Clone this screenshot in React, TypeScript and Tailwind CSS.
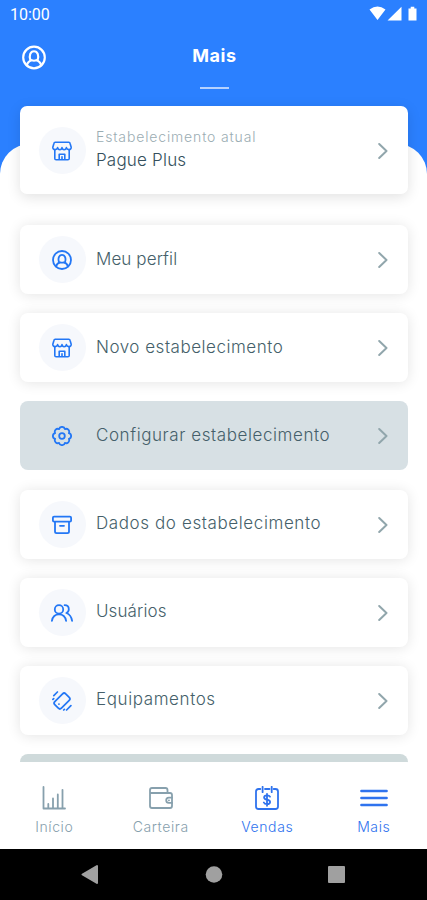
import React from 'react';
import clsx from 'clsx';

type IconProps = { className?: string };

const stroke = {
  fill: 'none',
  stroke: 'currentColor',
  strokeWidth: 1.8,
  strokeLinecap: 'round' as const,
  strokeLinejoin: 'round' as const,
};

const UserIcon = ({ className }: IconProps) => (
  <svg viewBox="0 0 20 20" className={className} {...stroke}>
    <circle cx="10" cy="10" r="9" />
    <path d="M7 12.3c-1.3-4 0-7.500 3-7.500s4.300 3.500 3 7.500" />
    <path d="M4 16.500c.7-2.700 2.200-3.800 4.300-4.200M16 16.500c-.7-2.700-2.200-3.800-4.300-4.200M8 12.200c1.200.6 2.800.6 4 0" />
  </svg>
);

const StoreIcon = ({ className }: IconProps) => (
  <svg viewBox="0 0 20 20" className={className} {...stroke} strokeWidth={1.6}>
    <path d="M3.200 1.200h13.600q1 0 1.200 1L19.200 6.200c.3 3-4 3.200-4.800.4-.6 2.800-4 2.800-4.400 0-.4 2.800-3.800 2.800-4.400 0-.8 2.800-5.100 2.600-4.800-.4L2 2.200q.2-1 1.200-1z" />
    <path d="M2.800 9v8.500q0 1.300 1.300 1.300h11.800q1.300 0 1.300-1.300V9M7.200 18.800v-5.600h5.600v5.600M10 15.800v3" />
  </svg>
);

const GearIcon = ({ className }: IconProps) => (
  <svg viewBox="0 0 20 20" className={className} {...stroke}>
    <path d="M16.900 7.100a3 3 0 0 1 0 5.800a3 3 0 0 1-4 4a3 3 0 0 1-5.800 0a3 3 0 0 1-4-4a3 3 0 0 1 0-5.800a3 3 0 0 1 4-4a3 3 0 0 1 5.800 0a3 3 0 0 1 4 4z" />
    <circle cx="10" cy="10" r="2.800" />
  </svg>
);

const ArchiveIcon = ({ className }: IconProps) => (
  <svg viewBox="0 0 20 20" className={className} {...stroke}>
    <rect x=".9" y="1.6" width="18.2" height="5" rx="1.2" />
    <path d="M3 6.800v9.800q0 1.600 1.600 1.600h10.800q1.600 0 1.600-1.600V6.800M8 10.800h4" />
  </svg>
);

const UsersIcon = ({ className }: IconProps) => (
  <svg viewBox="0 0 22 20" className={className} {...stroke}>
    <circle cx="8" cy="6.4" r="4.2" />
    <path d="M.9 17.800c.7-3.900 3.300-6.400 7.100-6.400s6.400 2.500 7.100 6.400M13.600 2.200c2.600 0 4.200 1.800 4.200 4.100 0 1.800-.9 3-2.400 3.700 3.100 1.200 5.100 4 5.700 7.800" />
  </svg>
);

const DeviceIcon = ({ className }: IconProps) => (
  <svg viewBox="0 0 20 20" className={className} {...stroke} strokeWidth={1.7}>
    <rect x="5.3" y="2.3" width="9.4" height="15.4" rx="2.2" transform="rotate(45 10 10)" />
    <path d="M1.800 4.600 5.400 1M.9 8.400l.8-.8M14.600 19l4.300-4.300M11.700 19l.7-.7M6.900 13.100h.1" />
  </svg>
);

const ChartIcon = ({ className }: IconProps) => (
  <svg viewBox="0 0 24 24" className={className} {...stroke}>
    <path d="M1.500 1v21.500H23M6.300 22v-4M11 22v-9.500M15.800 22V8.500M20.500 22V3.800" />
  </svg>
);

const WalletIcon = ({ className }: IconProps) => (
  <svg viewBox="0 0 24 24" className={className} {...stroke}>
    <path d="M18.500 7V4Q18.500 2 16.500 2H3Q1 2 1 4v16q0 2 2 2h18q2 0 2-2V9q0-2-2-2H1.500" />
    <path d="M23 11.700h-3.200a2.600 2.600 0 0 0 0 5.200H23M19.900 14.300h.1" />
  </svg>
);

const SalesIcon = ({ className }: IconProps) => (
  <svg viewBox="0 0 24 24" className={className} {...stroke}>
    <path d="M5.300 3H3.500Q1 3 1 5.500v15Q1 23 3.500 23h17q2.500 0 2.500-2.500v-15Q23 3 20.500 3h-1.800M10 3h4.500M7.600.8v5.400M16.700.8v5.400" />
    <path d="M15 10.700c-.5-1-1.500-1.400-3-1.400-1.700 0-2.900.8-2.900 2.100 0 3.200 6 1.400 6 4.600 0 1.400-1.300 2.200-3.100 2.200-1.500 0-2.700-.5-3.200-1.700M12 7.800v12" />
  </svg>
);

const MenuIcon = ({ className }: IconProps) => (
  <svg viewBox="0 0 28 24" className={className} {...stroke} strokeWidth={2.5}>
    <path d="M1.400 5h25.200M1.400 12h25.200M1.400 19h25.200" />
  </svg>
);

const Chevron = () => (
  <svg viewBox="0 0 10 18" className="w-[10px] h-[18px] shrink-0 mt-px text-[#91a6ac]" {...stroke} strokeWidth={2}>
    <path d="m1.200 2 7.300 7-7.300 7" />
  </svg>
);

const items = [
  { label: 'Meu perfil', icon: UserIcon, tracking: 'tracking-[0.1px]' },
  { label: 'Novo estabelecimento', icon: StoreIcon, tracking: 'tracking-[0.52px]' },
  { label: 'Configurar estabelecimento', icon: GearIcon, tracking: 'tracking-[0.58px]', active: true },
  { label: 'Dados do estabelecimento', icon: ArchiveIcon, tracking: 'tracking-[0.6px]' },
  { label: 'Usuários', icon: UsersIcon, tracking: 'tracking-[0.1px]' },
  { label: 'Equipamentos', icon: DeviceIcon, tracking: 'tracking-[0.6px]' },
];

const tabs = [
  { label: 'Início', icon: ChartIcon },
  { label: 'Carteira', icon: WalletIcon },
  { label: 'Vendas', icon: SalesIcon, active: true },
  { label: 'Mais', icon: MenuIcon, active: true },
];

const App: React.FC = () => {
  return (
    <div className="w-full h-[900px] flex flex-col overflow-hidden bg-[#2b80ff] font-['Inter',sans-serif]">
      {/* Status bar */}
      <div className="h-7 shrink-0 flex items-center justify-between pl-[10px] pr-[8px] text-white">
        <span className="font-['Roboto',sans-serif] text-[16px] leading-7 pt-px">10:00</span>
        <svg viewBox="0 0 50 16" className="w-[50px] h-4" fill="currentColor">
          <path d="M.5 3.400Q8.500-2.400 16.500 3.400L8.500 14zM18.500 14.500 32.500.8v13.700zM39.500 2.500h2.200V.8h3.600v1.700h2.200v12h-8z" />
        </svg>
      </div>

      {/* Header */}
      <header className="h-[116px] shrink-0 pl-[22px] pr-[20px] pt-[14px] text-white">
        <div className="grid grid-cols-[25px_1fr_25px] items-center">
          <UserIcon className="w-[24px] h-[25px] mt-[3px]" />
          <h1 className="text-center text-[18px] leading-7 font-bold tracking-[0.6px]">Mais</h1>
        </div>
        <div className="mx-auto mt-[17px] w-[29px] h-[2px] bg-[#b5d2ff]" />
      </header>

      {/* Content */}
      <main className="flex-1 min-h-0 bg-white rounded-t-[30px] pl-5 pr-[19px]">
        <div className="-mt-[38px] h-[88px] flex items-center bg-white rounded-[7px] pl-[19px] pr-5 shadow-[0_3px_14px_rgba(0,0,0,0.12)]">
          <div className="w-[47px] h-[47px] rounded-full bg-[#f6f8fc] flex items-center justify-center shrink-0 text-[#2377f5]">
            <StoreIcon className="w-[22px] h-5 -ml-px mt-px" />
          </div>
          <div className="flex-1 ml-[10px] -mt-[3px]">
            <p className="text-[14px] leading-[22px] font-light tracking-[0.85px] text-[#9badb3]">Estabelecimento atual</p>
            <p className="text-[17px] leading-6 font-light tracking-[0.2px] text-[#344f5c]">Pague Plus</p>
          </div>
          <Chevron />
        </div>

        <div className="mt-[31px] flex flex-col gap-[19.2px]">
          {items.map((item) => (
            <div
              key={item.label}
              className={clsx(
                'h-[69px] shrink-0 flex items-center rounded-[8px] pl-[19px] pr-5',
                item.active ? 'bg-[#d7e0e4]' : 'bg-white shadow-[0_1px_14px_rgba(0,0,0,0.11)]'
              )}
            >
              <div className={clsx('w-[47px] h-[47px] rounded-full flex items-center justify-center shrink-0 text-[#2377f5]', !item.active && 'bg-[#f6f8fc]')}>
                <item.icon className="w-[22px] h-5 -ml-px mt-px" />
              </div>
              <span className={clsx('flex-1 ml-[10px] -mt-[2px] text-[17px] leading-6 font-light text-[#455f6a] whitespace-nowrap', item.tracking)}>
                {item.label}
              </span>
              <Chevron />
            </div>
          ))}
          <div className="h-[69px] shrink-0 rounded-[8px] bg-[#cfdadb]" />
        </div>
      </main>

      {/* Bottom tabs, overlapping the end of the list */}
      <nav className="relative z-10 -mt-5 h-[87px] shrink-0 bg-white rounded-t-[20px] grid grid-cols-4 pl-px">
        {tabs.map((tab) => (
          <div key={tab.label} className={clsx('flex flex-col items-center pt-6', tab.active ? 'text-[#2f73ee]' : 'text-[#87a0ad]')}>
            <tab.icon className="w-7 h-6" />
            <span className="mt-[7px] text-[14px] leading-5 font-light tracking-[0.6px]">{tab.label}</span>
          </div>
        ))}
      </nav>

      {/* System navigation */}
      <div className="relative z-10 h-[51px] shrink-0 bg-black flex items-center text-[#a0a0a0]">
        <svg viewBox="0 0 427 51" className="w-full h-[51px]" fill="currentColor">
          <path d="M82.500 25.500 97 17v17z" strokeWidth="2" stroke="currentColor" strokeLinejoin="round" />
          <circle cx="214" cy="25.500" r="8.300" />
          <rect x="328" y="17" width="17" height="17" rx="1" />
        </svg>
      </div>
    </div>
  );
};

export default App;
